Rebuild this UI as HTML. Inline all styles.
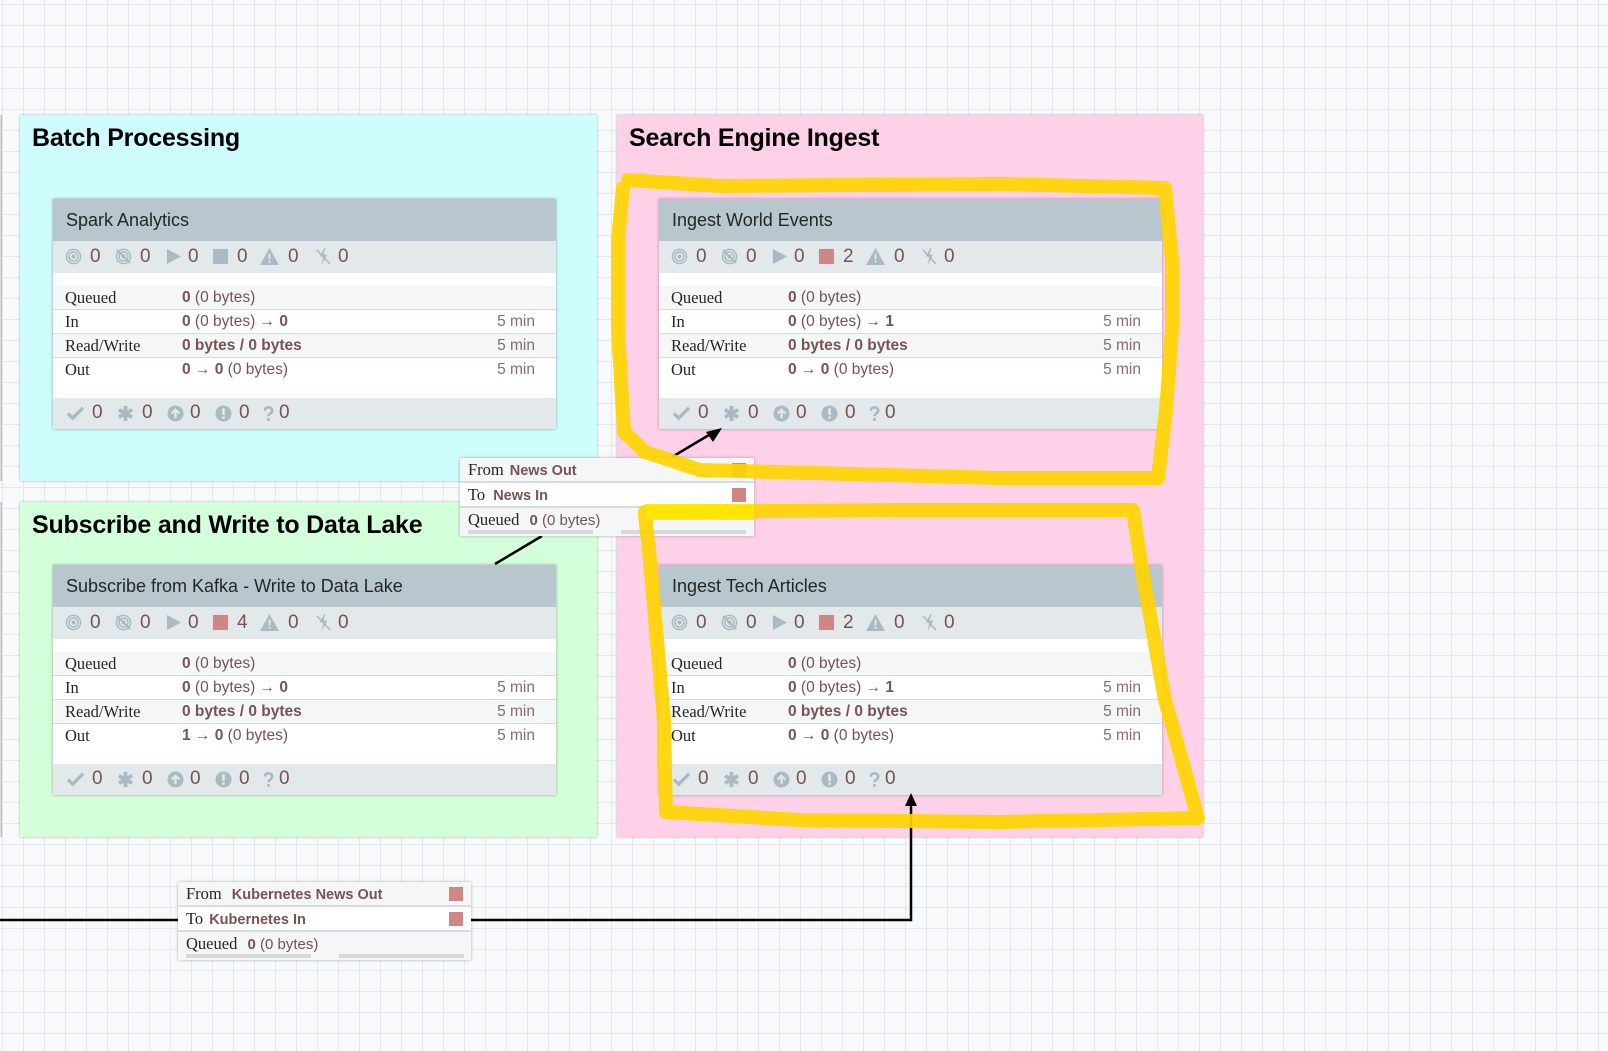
<!DOCTYPE html>
<html><head><meta charset="utf-8"><style>
*{margin:0;padding:0;box-sizing:border-box}
body{width:1608px;height:1051px;overflow:hidden;position:relative;font-family:"Liberation Sans",sans-serif;
background-color:#f8f9fa;
background-image:linear-gradient(to right,#e3e8eb 1px,transparent 1px),linear-gradient(to bottom,#e3e8eb 1px,transparent 1px);
background-size:21px 21px;background-position:2px 4px;}
.abs{position:absolute}
.panel{position:absolute;box-shadow:0 0 2px rgba(0,0,0,.35)}
.ptitle{position:absolute;left:12px;top:9px;font-size:25px;font-weight:bold;color:#000;letter-spacing:-0.2px}
.card{position:absolute;width:503px;height:230px;background:#fff;box-shadow:0 0 3px rgba(0,0,0,.35)}
.hdr{position:absolute;left:0;top:0;width:100%;height:42px;background:#b8c6cd;color:#262626;font-size:18px;line-height:42px;padding-left:13px}
.stats{position:absolute;left:0;top:42px;width:100%;height:32px;background:#e3e8eb}
.foot{position:absolute;left:0;top:199px;width:100%;height:31px;background:#e3e8eb}
.ic{position:absolute}
.n{position:absolute;font-size:19px;color:#775351;line-height:20px}
.rows{position:absolute;left:0;top:87px;width:100%}
.row{height:24px;position:relative;border-bottom:1px solid #d6dde0;font-size:15.5px;line-height:23px}
.row.g{background:#f4f6f7}
.row .l{position:absolute;left:12px;font-family:"Liberation Serif",serif;color:#262626;font-size:16.5px}
.row .v{position:absolute;left:129px;color:#775351}
.row .t{position:absolute;right:21px;color:#775351;opacity:.85}
b{font-weight:bold}
.conn{position:absolute;background:#f4f6f7;box-shadow:0 0 3px rgba(0,0,0,.3)}
.crow{position:relative;height:25px;border-bottom:2px solid #d6dde0;line-height:24px;font-size:15px}
.crow .l{font-family:"Liberation Serif",serif;color:#262626;font-size:16.5px;margin-left:8px}
.crow b{color:#775351;font-size:14.5px;margin-left:6px}
.crow .sq{position:absolute;right:8px;top:5px;width:14px;height:14px;background:#d18686}
</style></head><body>
<svg width="0" height="0" style="position:absolute">
<defs>
<symbol id="run" viewBox="0 0 18 18"><circle cx="9" cy="9" r="7.5" fill="none" stroke="#a8bac3" stroke-width="1.6"/><circle cx="9" cy="9" r="4.8" fill="none" stroke="#a8bac3" stroke-width="1.6"/><circle cx="9" cy="9" r="2.2" fill="#a8bac3"/></symbol>
<symbol id="stop" viewBox="0 0 18 18"><circle cx="9" cy="9" r="7.5" fill="none" stroke="#a8bac3" stroke-width="1.6"/><circle cx="9" cy="9" r="4.8" fill="none" stroke="#a8bac3" stroke-width="1.6"/><circle cx="9" cy="9" r="2.2" fill="#a8bac3"/><path d="M2 2L16 16" stroke="#a8bac3" stroke-width="2"/></symbol>
<symbol id="play" viewBox="0 0 18 18"><path d="M2 1L17 9L2 17Z" fill="#a8bac3"/></symbol>
<symbol id="sqg" viewBox="0 0 18 18"><rect x="1" y="1" width="16" height="16" fill="#a8bac3"/></symbol>
<symbol id="sqr" viewBox="0 0 18 18"><rect x="1" y="1" width="16" height="16" fill="#d18686"/></symbol>
<symbol id="warn" viewBox="0 0 20 18"><path d="M10 0L20 18H0Z" fill="#a8bac3"/><rect x="9" y="6" width="2" height="6" fill="#e3e8eb"/><rect x="9" y="13.5" width="2" height="2" fill="#e3e8eb"/></symbol>
<symbol id="flash" viewBox="0 0 18 18"><path d="M10 0L5 9H9L7 18L13 7H9L11 0Z" fill="#a8bac3"/><path d="M2 2L16 17" stroke="#a8bac3" stroke-width="1.6"/></symbol>
<symbol id="chk" viewBox="0 0 18 18"><path d="M1 9L6 14L17 3" fill="none" stroke="#a8bac3" stroke-width="3.5"/></symbol>
<symbol id="ast" viewBox="0 0 18 18"><g stroke="#a8bac3" stroke-width="4"><path d="M9 1V17"/><path d="M2 5L16 13"/><path d="M2 13L16 5"/></g></symbol>
<symbol id="up" viewBox="0 0 18 18"><circle cx="9" cy="9" r="8.5" fill="#a8bac3"/><path d="M9 14V5M5 9L9 5L13 9" fill="none" stroke="#e3e8eb" stroke-width="2.4"/></symbol>
<symbol id="exc" viewBox="0 0 18 18"><circle cx="9" cy="9" r="8.5" fill="#a8bac3"/><rect x="7.6" y="3.5" width="2.8" height="7" fill="#e3e8eb"/><rect x="7.6" y="12" width="2.8" height="2.6" fill="#e3e8eb"/></symbol>
<symbol id="q" viewBox="0 0 12 18"><path d="M2 6C2 1 10 1 10 6C10 9 6 9 6 12" fill="none" stroke="#a8bac3" stroke-width="2.8"/><rect x="4.5" y="14" width="3" height="3" fill="#a8bac3"/></symbol>
</defs></svg>

<div class="abs" style="left:0;top:115px;width:2px;height:366px;background:#ddd;border-right:1px solid #bbb"></div>
<div class="abs" style="left:0;top:502px;width:2px;height:335px;background:#ddd;border-right:1px solid #bbb"></div>

<div class="panel" style="left:20px;top:115px;width:577px;height:366px;background:#cffcfd"><div class="ptitle">Batch Processing</div></div>
<div class="panel" style="left:20px;top:502px;width:577px;height:335px;background:#d4ffdb"><div class="ptitle">Subscribe and Write to Data Lake</div></div>
<div class="panel" style="left:617px;top:115px;width:586px;height:722px;background:#ffd1e8"><div class="ptitle">Search Engine Ingest</div></div>

<div class="card" style="left:53px;top:199px">
<div class="hdr">Spark Analytics</div>
<div class="stats">
<svg class="ic" style="left:12px;top:7px" width="17" height="17"><use href="#run"/></svg><span class="n" style="left:37px;top:6px">0</span>
<svg class="ic" style="left:62px;top:7px" width="17" height="17"><use href="#stop"/></svg><span class="n" style="left:87px;top:6px">0</span>
<svg class="ic" style="left:112px;top:7px" width="17" height="17"><use href="#play"/></svg><span class="n" style="left:135px;top:6px">0</span>
<svg class="ic" style="left:159px;top:7px" width="17" height="17"><use href="#sqg"/></svg><span class="n" style="left:184px;top:6px">0</span>
<svg class="ic" style="left:207px;top:7px" width="19" height="17"><use href="#warn"/></svg><span class="n" style="left:235px;top:6px">0</span>
<svg class="ic" style="left:262px;top:7px" width="17" height="17"><use href="#flash"/></svg><span class="n" style="left:285px;top:6px">0</span>
</div>
<div class="rows">
<div class="row g"><span class="l">Queued</span><span class="v"><b>0</b> (0 bytes)</span></div>
<div class="row"><span class="l">In</span><span class="v"><b>0</b> (0 bytes) → <b>0</b></span><span class="t">5 min</span></div>
<div class="row g"><span class="l">Read/Write</span><span class="v"><b>0 bytes / 0 bytes</b></span><span class="t">5 min</span></div>
<div class="row" style="border:none"><span class="l">Out</span><span class="v"><b>0</b> → <b>0</b> (0 bytes)</span><span class="t">5 min</span></div>
</div>
<div class="foot">
<svg class="ic" style="left:14px;top:7px" width="17" height="17"><use href="#chk"/></svg><span class="n" style="left:39px;top:5px">0</span>
<svg class="ic" style="left:64px;top:7px" width="17" height="17"><use href="#ast"/></svg><span class="n" style="left:89px;top:5px">0</span>
<svg class="ic" style="left:114px;top:7px" width="17" height="17"><use href="#up"/></svg><span class="n" style="left:137px;top:5px">0</span>
<svg class="ic" style="left:162px;top:7px" width="17" height="17"><use href="#exc"/></svg><span class="n" style="left:186px;top:5px">0</span>
<svg class="ic" style="left:210px;top:7px" width="11" height="17"><use href="#q"/></svg><span class="n" style="left:226px;top:5px">0</span>
</div>
</div>

<div class="card" style="left:659px;top:199px">
<div class="hdr">Ingest World Events</div>
<div class="stats">
<svg class="ic" style="left:12px;top:7px" width="17" height="17"><use href="#run"/></svg><span class="n" style="left:37px;top:6px">0</span>
<svg class="ic" style="left:62px;top:7px" width="17" height="17"><use href="#stop"/></svg><span class="n" style="left:87px;top:6px">0</span>
<svg class="ic" style="left:112px;top:7px" width="17" height="17"><use href="#play"/></svg><span class="n" style="left:135px;top:6px">0</span>
<svg class="ic" style="left:159px;top:7px" width="17" height="17"><use href="#sqr"/></svg><span class="n" style="left:184px;top:6px">2</span>
<svg class="ic" style="left:207px;top:7px" width="19" height="17"><use href="#warn"/></svg><span class="n" style="left:235px;top:6px">0</span>
<svg class="ic" style="left:262px;top:7px" width="17" height="17"><use href="#flash"/></svg><span class="n" style="left:285px;top:6px">0</span>
</div>
<div class="rows">
<div class="row g"><span class="l">Queued</span><span class="v"><b>0</b> (0 bytes)</span></div>
<div class="row"><span class="l">In</span><span class="v"><b>0</b> (0 bytes) → <b>1</b></span><span class="t">5 min</span></div>
<div class="row g"><span class="l">Read/Write</span><span class="v"><b>0 bytes / 0 bytes</b></span><span class="t">5 min</span></div>
<div class="row" style="border:none"><span class="l">Out</span><span class="v"><b>0</b> → <b>0</b> (0 bytes)</span><span class="t">5 min</span></div>
</div>
<div class="foot">
<svg class="ic" style="left:14px;top:7px" width="17" height="17"><use href="#chk"/></svg><span class="n" style="left:39px;top:5px">0</span>
<svg class="ic" style="left:64px;top:7px" width="17" height="17"><use href="#ast"/></svg><span class="n" style="left:89px;top:5px">0</span>
<svg class="ic" style="left:114px;top:7px" width="17" height="17"><use href="#up"/></svg><span class="n" style="left:137px;top:5px">0</span>
<svg class="ic" style="left:162px;top:7px" width="17" height="17"><use href="#exc"/></svg><span class="n" style="left:186px;top:5px">0</span>
<svg class="ic" style="left:210px;top:7px" width="11" height="17"><use href="#q"/></svg><span class="n" style="left:226px;top:5px">0</span>
</div>
</div>

<div class="card" style="left:53px;top:565px">
<div class="hdr">Subscribe from Kafka - Write to Data Lake</div>
<div class="stats">
<svg class="ic" style="left:12px;top:7px" width="17" height="17"><use href="#run"/></svg><span class="n" style="left:37px;top:6px">0</span>
<svg class="ic" style="left:62px;top:7px" width="17" height="17"><use href="#stop"/></svg><span class="n" style="left:87px;top:6px">0</span>
<svg class="ic" style="left:112px;top:7px" width="17" height="17"><use href="#play"/></svg><span class="n" style="left:135px;top:6px">0</span>
<svg class="ic" style="left:159px;top:7px" width="17" height="17"><use href="#sqr"/></svg><span class="n" style="left:184px;top:6px">4</span>
<svg class="ic" style="left:207px;top:7px" width="19" height="17"><use href="#warn"/></svg><span class="n" style="left:235px;top:6px">0</span>
<svg class="ic" style="left:262px;top:7px" width="17" height="17"><use href="#flash"/></svg><span class="n" style="left:285px;top:6px">0</span>
</div>
<div class="rows">
<div class="row g"><span class="l">Queued</span><span class="v"><b>0</b> (0 bytes)</span></div>
<div class="row"><span class="l">In</span><span class="v"><b>0</b> (0 bytes) → <b>0</b></span><span class="t">5 min</span></div>
<div class="row g"><span class="l">Read/Write</span><span class="v"><b>0 bytes / 0 bytes</b></span><span class="t">5 min</span></div>
<div class="row" style="border:none"><span class="l">Out</span><span class="v"><b>1</b> → <b>0</b> (0 bytes)</span><span class="t">5 min</span></div>
</div>
<div class="foot">
<svg class="ic" style="left:14px;top:7px" width="17" height="17"><use href="#chk"/></svg><span class="n" style="left:39px;top:5px">0</span>
<svg class="ic" style="left:64px;top:7px" width="17" height="17"><use href="#ast"/></svg><span class="n" style="left:89px;top:5px">0</span>
<svg class="ic" style="left:114px;top:7px" width="17" height="17"><use href="#up"/></svg><span class="n" style="left:137px;top:5px">0</span>
<svg class="ic" style="left:162px;top:7px" width="17" height="17"><use href="#exc"/></svg><span class="n" style="left:186px;top:5px">0</span>
<svg class="ic" style="left:210px;top:7px" width="11" height="17"><use href="#q"/></svg><span class="n" style="left:226px;top:5px">0</span>
</div>
</div>

<div class="card" style="left:659px;top:565px">
<div class="hdr">Ingest Tech Articles</div>
<div class="stats">
<svg class="ic" style="left:12px;top:7px" width="17" height="17"><use href="#run"/></svg><span class="n" style="left:37px;top:6px">0</span>
<svg class="ic" style="left:62px;top:7px" width="17" height="17"><use href="#stop"/></svg><span class="n" style="left:87px;top:6px">0</span>
<svg class="ic" style="left:112px;top:7px" width="17" height="17"><use href="#play"/></svg><span class="n" style="left:135px;top:6px">0</span>
<svg class="ic" style="left:159px;top:7px" width="17" height="17"><use href="#sqr"/></svg><span class="n" style="left:184px;top:6px">2</span>
<svg class="ic" style="left:207px;top:7px" width="19" height="17"><use href="#warn"/></svg><span class="n" style="left:235px;top:6px">0</span>
<svg class="ic" style="left:262px;top:7px" width="17" height="17"><use href="#flash"/></svg><span class="n" style="left:285px;top:6px">0</span>
</div>
<div class="rows">
<div class="row g"><span class="l">Queued</span><span class="v"><b>0</b> (0 bytes)</span></div>
<div class="row"><span class="l">In</span><span class="v"><b>0</b> (0 bytes) → <b>1</b></span><span class="t">5 min</span></div>
<div class="row g"><span class="l">Read/Write</span><span class="v"><b>0 bytes / 0 bytes</b></span><span class="t">5 min</span></div>
<div class="row" style="border:none"><span class="l">Out</span><span class="v"><b>0</b> → <b>0</b> (0 bytes)</span><span class="t">5 min</span></div>
</div>
<div class="foot">
<svg class="ic" style="left:14px;top:7px" width="17" height="17"><use href="#chk"/></svg><span class="n" style="left:39px;top:5px">0</span>
<svg class="ic" style="left:64px;top:7px" width="17" height="17"><use href="#ast"/></svg><span class="n" style="left:89px;top:5px">0</span>
<svg class="ic" style="left:114px;top:7px" width="17" height="17"><use href="#up"/></svg><span class="n" style="left:137px;top:5px">0</span>
<svg class="ic" style="left:162px;top:7px" width="17" height="17"><use href="#exc"/></svg><span class="n" style="left:186px;top:5px">0</span>
<svg class="ic" style="left:210px;top:7px" width="11" height="17"><use href="#q"/></svg><span class="n" style="left:226px;top:5px">0</span>
</div>
</div>

<svg class="abs" style="left:0;top:0" width="1608" height="1051">
<g stroke="#000" stroke-width="2.5" fill="none">
<path d="M495 564L542 536"/>
<path d="M672 457L714 432"/>
<path d="M0 920H178"/>
<path d="M471 920H911V802"/>
</g>
<path d="M722 428L706 432L713 442Z" fill="#000"/>
<path d="M911 793L905 806H917Z" fill="#000"/>
</svg>

<div class="conn" style="left:460px;top:458px;width:294px;height:78px">
<div class="crow"><span class="l">From</span><b>News Out</b><span class="sq"></span></div>
<div class="crow" style="background:#fff"><span class="l">To</span><b style="margin-left:8px">News In</b><span class="sq"></span></div>
<div class="crow" style="border:none"><span class="l">Queued</span> <b style="font-size:15px">0</b> <span style="color:#775351">(0 bytes)</span></div>
<div class="abs" style="left:8px;top:72px;width:125px;height:4px;background:#d8d8d8"></div>
<div class="abs" style="left:161px;top:72px;width:125px;height:4px;background:#d8d8d8"></div>
</div>
<div class="conn" style="left:178px;top:882px;width:293px;height:78px">
<div class="crow"><span class="l">From</span><b style="margin-left:10px">Kubernetes News Out</b><span class="sq"></span></div>
<div class="crow" style="background:#fff"><span class="l">To</span><b>Kubernetes In</b><span class="sq"></span></div>
<div class="crow" style="border:none"><span class="l">Queued</span> <b style="font-size:15px">0</b> <span style="color:#775351">(0 bytes)</span></div>
<div class="abs" style="left:8px;top:72px;width:125px;height:4px;background:#d8d8d8"></div>
<div class="abs" style="left:161px;top:72px;width:125px;height:4px;background:#d8d8d8"></div>
</div>

<svg class="abs" style="left:0;top:0" width="1608" height="1051">
<g fill="none" stroke="#ffd400" stroke-opacity="0.92" stroke-width="14" stroke-linejoin="round" stroke-linecap="round">
<path d="M628 180L720 186L1000 184L1165 188L1172 260L1172 330L1166 410L1158 478L1000 478L850 474L700 470L645 452L624 432L618 330L618 240L623 188"/>
<path d="M645 512L900 510L1133 510L1142 570L1165 700L1198 818L1000 822L800 820L666 812L664 720L650 560L645 515"/>
</g>
<rect x="645" y="504" width="109" height="16" fill="#ffe600" opacity="0.85"/>
</svg>
</body></html>
